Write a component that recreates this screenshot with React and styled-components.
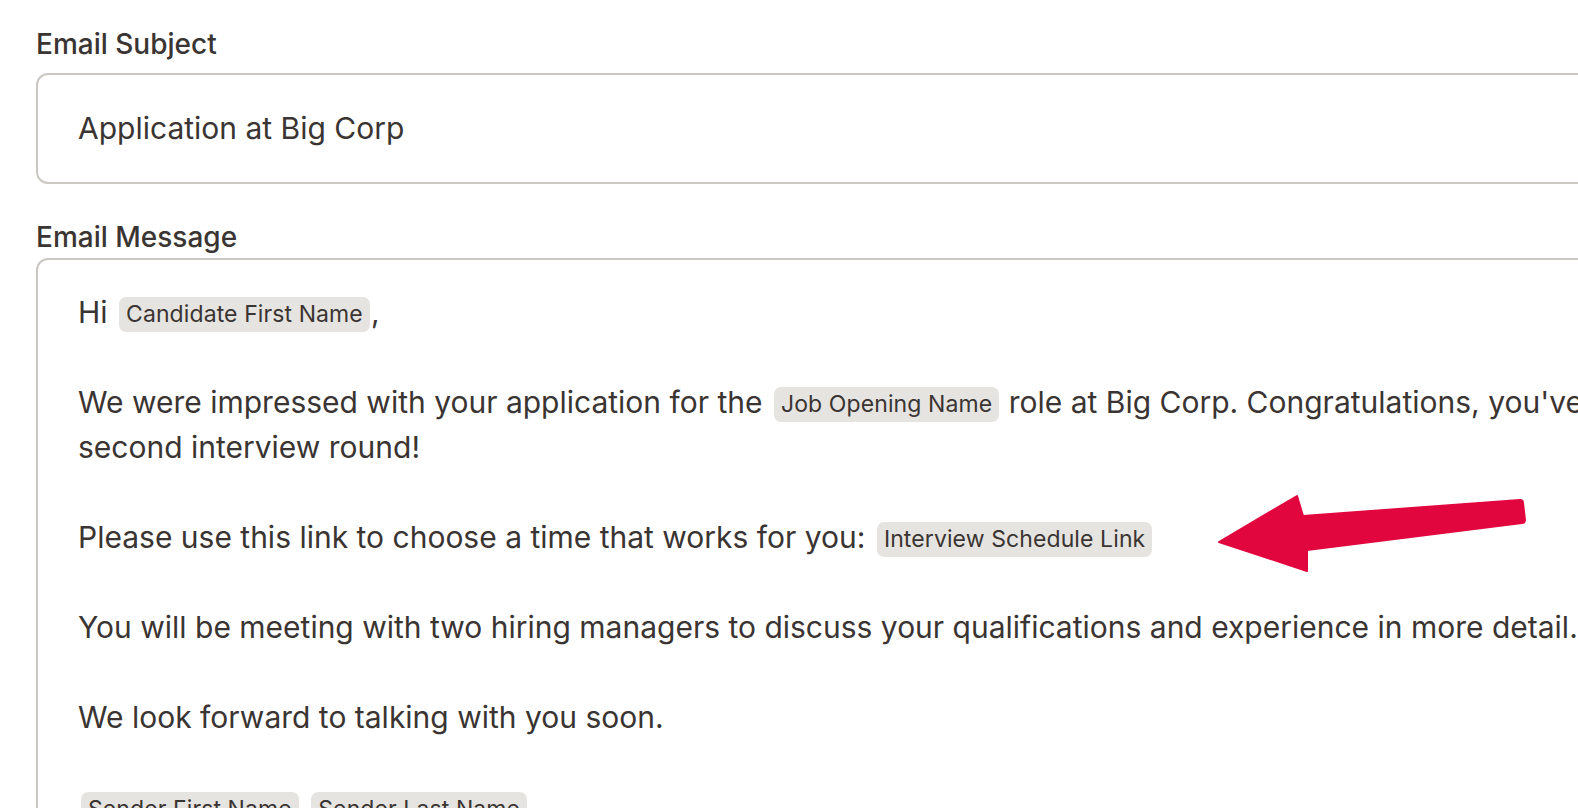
import React from 'react';
import styled, { createGlobalStyle } from 'styled-components';

const GlobalStyle = createGlobalStyle`
  html, body {
    margin: 0;
    padding: 0;
    background: #ffffff;
    overflow: hidden;
  }
  body {
    font-family: Inter, 'Noto Sans', sans-serif;
    color: #3a3432;
  }
`;

const Page = styled.div`
  position: relative;
  width: 1800px;
  padding: 28px 0 0 36px;
  box-sizing: border-box;
`;

const Label = styled.div`
  font-size: 28px;
  font-weight: 500;
  line-height: 32px;
  margin-top: ${(p) => p.$top || 0}px;
  margin-bottom: ${(p) => p.$gap || 12}px;
`;

const Field = styled.div`
  border: 2px solid #cbc7c3;
  border-radius: 12px;
  padding: ${(p) => (p.$multi ? '30px 40px 40px' : '31px 40px')};
  font-size: 30px;
  line-height: 45px;
  white-space: nowrap;
`;

const Para = styled.p`
  margin: 0 0 45px;
  &:last-child {
    margin-bottom: 0;
  }
`;

const Token = styled.span`
  display: inline-block;
  background: #e6e4e0;
  border-radius: 7px;
  padding: 0 7px;
  margin: 0 1px 0 3px;
  font-size: 23px;
  letter-spacing: 0.1px;
  line-height: 35px;
  vertical-align: 1px;
  color: #3a3432;
`;

const Arrow = styled.svg`
  position: absolute;
  left: 1200px;
  top: 480px;
  width: 340px;
  height: 100px;
  overflow: visible;
`;

export default function App() {
  return (
    <>
      <GlobalStyle />
      <Page>
        <Label $gap={13}>Email Subject</Label>
        <Field>Application at Big Corp</Field>

        <Label $top={37} $gap={5}>Email Message</Label>
        <Field $multi>
          <Para>
            Hi <Token>Candidate First Name</Token>,
          </Para>
          <Para>
            We were impressed with your application for the <Token>Job Opening Name</Token> role at Big Corp. Congratulations, you've made it to the
            <br />
            second interview round!
          </Para>
          <Para>
            Please use this link to choose a time that works for you: <Token>Interview Schedule Link</Token>
          </Para>
          <Para>
            You will be meeting with two hiring managers to discuss your qualifications and experience in more detail.
          </Para>
          <Para>We look forward to talking with you soon.</Para>
          <Para>
            <Token>Sender First Name</Token> <Token>Sender Last Name</Token>
          </Para>
        </Field>

        <Arrow viewBox="1200 480 340 100">
          <path
            d="M1219 542 L1297 496 L1303 516 L1520 500 Q1523 500 1523 503 L1525 520 Q1525 523 1522 523 L1307 550 L1307 571 Z"
            fill="#e2063f"
            stroke="#e2063f"
            strokeWidth="2"
            strokeLinejoin="round"
          />
        </Arrow>
      </Page>
    </>
  );
}
